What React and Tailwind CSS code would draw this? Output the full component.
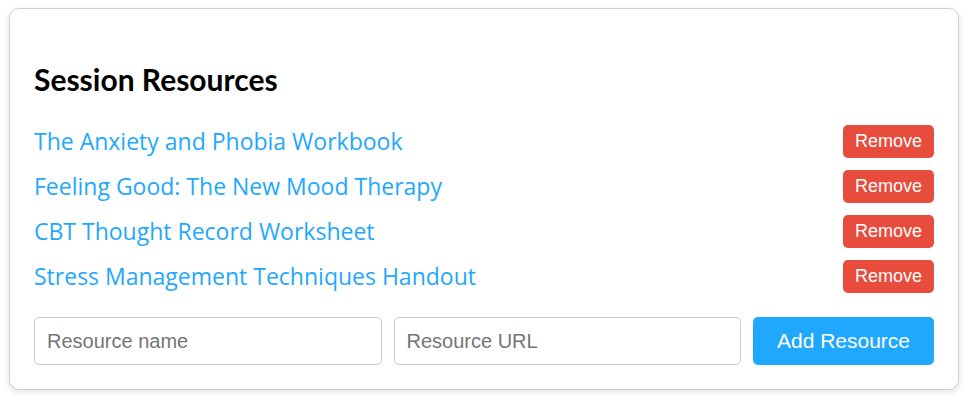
import React, { useState } from "react";

const initial = [
  { name: "The Anxiety and Phobia Workbook", url: "#" },
  { name: "Feeling Good: The New Mood Therapy", url: "#" },
  { name: "CBT Thought Record Worksheet", url: "#" },
  { name: "Stress Management Techniques Handout", url: "#" },
];

const SessionResources = () => {
  const [resources, setResources] = useState(initial);
  const [name, setName] = useState("");
  const [url, setUrl] = useState("");

  const addResource = () => {
    if (!name.trim()) return;
    setResources([...resources, { name, url: url || "#" }]);
    setName("");
    setUrl("");
  };

  return (
    <div className="min-h-screen bg-white pl-[9px] pt-2">
      <div className="w-[950px] rounded-[10px] border border-[#cfcfcf] bg-white px-6 pt-[53px] pb-6 shadow-[0_2px_6px_rgba(0,0,0,0.12)]">
        {/* Header */}
        <h2 className="font-['Lato',sans-serif] text-[30px] font-bold leading-[34px] text-black">
          Session Resources
        </h2>

        {/* List */}
        <ul className="mt-[29px] flex flex-col gap-3">
          {resources.map((r, i) => (
            <li key={i} className="flex h-[33px] items-center justify-between">
              <a
                href={r.url}
                className="font-['Open_Sans',sans-serif] text-[23px] text-[#1fa8fd]"
              >
                {r.name}
              </a>
              <button
                type="button"
                onClick={() => setResources(resources.filter((_, j) => j !== i))}
                className="h-[33px] w-[91px] rounded-[5px] bg-[#e74c3c] font-['Liberation_Sans',sans-serif] text-[18px] text-white"
              >
                Remove
              </button>
            </li>
          ))}
        </ul>

        {/* Add form */}
        <div className="mt-6 flex gap-3">
          <input
            type="text"
            value={name}
            onChange={(e) => setName(e.target.value)}
            placeholder="Resource name"
            className="h-12 min-w-0 flex-1 rounded-[5px] border border-[#cccccc] px-3 font-['Liberation_Sans',sans-serif] text-[20px] outline-none placeholder:text-[#757575]"
          />
          <input
            type="text"
            value={url}
            onChange={(e) => setUrl(e.target.value)}
            placeholder="Resource URL"
            className="h-12 min-w-0 flex-1 rounded-[5px] border border-[#cccccc] px-3 font-['Liberation_Sans',sans-serif] text-[20px] outline-none placeholder:text-[#757575]"
          />
          <button
            type="button"
            onClick={addResource}
            className="h-12 w-[181px] rounded-[5px] bg-[#1fa8fd] font-['Liberation_Sans',sans-serif] text-[21px] text-white"
          >
            Add Resource
          </button>
        </div>
      </div>
    </div>
  );
};

export default SessionResources;
